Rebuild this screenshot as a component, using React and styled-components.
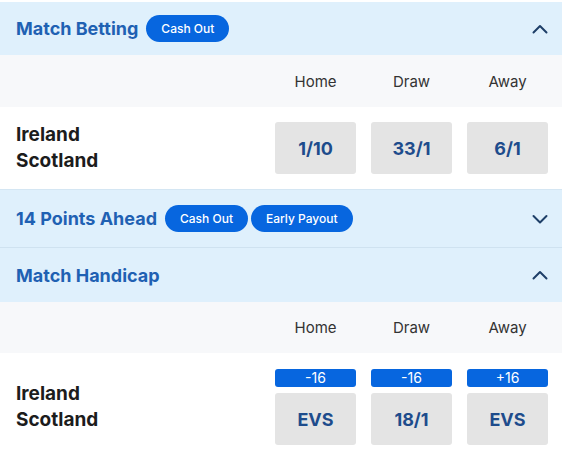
import React from "react"
import styled, { createGlobalStyle } from "styled-components"

const Global = createGlobalStyle`
  body {
    margin: 0;
    background: #ffffff;
    font-family: Inter, "Noto Sans", sans-serif;
  }
`
const Main = styled.div`
  width: 562px;
  padding-top: 2px;
  background: #ffffff;
`
const Header = styled.div`
  display: flex;
  align-items: center;
  gap: 3px;
  height: ${p => p.h}px;
  padding: 0 14px 0 16px;
  background: #dff0fc;
  border-top: ${p => (p.lined ? "1px solid #d4e6f3" : "none")};
  border-bottom: ${p => (p.lined ? "1px solid #cfe2f0" : "none")};
`
const Title = styled.div`
  font-size: 18px;
  font-weight: 700;
  color: #1f61b3;
  margin-right: 5px;
`
const Pill = styled.div`
  display: flex;
  align-items: center;
  height: 27px;
  padding: 0 15px;
  border-radius: 14px;
  background: #0766df;
  color: #ffffff;
  font-size: 12px;
  font-weight: 500;
`
const Chevron = styled.svg`
  margin-left: auto;
  width: 16px;
  height: 10px;
`
const Columns = styled.div`
  display: grid;
  grid-template-columns: 81px 81px 81px;
  column-gap: 15px;
  justify-content: end;
  align-items: center;
  height: ${p => p.h}px;
  padding-right: 14px;
  background: #f7f8fa;
`
const ColLabel = styled.div`
  text-align: center;
  font-size: 15px;
  color: #333333;
`
const Row = styled.div`
  display: flex;
  align-items: center;
  padding: ${p => p.pad};
  padding-left: 16px;
  padding-right: 14px;
  background: #ffffff;
`
const Teams = styled.div`
  flex: 1;
  font-size: 19px;
  font-weight: 700;
  line-height: 26px;
  color: #1c1c1c;
`
const Prices = styled.div`
  display: grid;
  grid-template-columns: 81px 81px 81px;
  column-gap: 15px;
`
const Cell = styled.div`
  display: flex;
  flex-direction: column;
  gap: 6px;
`
const Line = styled.div`
  height: 18px;
  border-radius: 3px;
  background: #0766df;
  color: #ffffff;
  font-size: 14px;
  line-height: 18px;
  text-align: center;
`
const Odds = styled.div`
  display: flex;
  align-items: center;
  justify-content: center;
  height: 52px;
  border-radius: 3px;
  background: #e4e4e4;
  color: #1e4c8c;
  font-size: 18px;
  font-weight: 700;
`

const Arrow = ({ up }) => (
  <Chevron viewBox="0 0 16 10">
    <path
      d={up ? "M1.5 8.5 L8 2 L14.5 8.5" : "M1.5 2 L8 8.5 L14.5 2"}
      fill="none"
      stroke="#1e3f68"
      strokeWidth="2"
      strokeLinecap="round"
      strokeLinejoin="round"
    />
  </Chevron>
)

const ColHeads = ({ h }) => (
  <Columns h={h}>
    <ColLabel>Home</ColLabel>
    <ColLabel>Draw</ColLabel>
    <ColLabel>Away</ColLabel>
  </Columns>
)

const TeamNames = () => (
  <Teams>
    Ireland
    <br />
    Scotland
  </Teams>
)

export default function App() {
  const handicap = [
    { line: "-16", odds: "EVS" },
    { line: "-16", odds: "18/1" },
    { line: "+16", odds: "EVS" },
  ]
  return (
    <Main>
      <Global />
      <Header h={53}>
        <Title>Match Betting</Title>
        <Pill>Cash Out</Pill>
        <Arrow up />
      </Header>
      <ColHeads h={52} />
      <Row pad="15px 0">
        <TeamNames />
        <Prices>
          <Odds>1/10</Odds>
          <Odds>33/1</Odds>
          <Odds>6/1</Odds>
        </Prices>
      </Row>
      <Header h={57} lined>
        <Title>14 Points Ahead</Title>
        <Pill>Cash Out</Pill>
        <Pill>Early Payout</Pill>
        <Arrow />
      </Header>
      <Header h={54}>
        <Title>Match Handicap</Title>
        <Arrow up />
      </Header>
      <ColHeads h={51} />
      <Row pad="16px 0">
        <TeamNames />
        <Prices>
          {handicap.map((c, i) => (
            <Cell key={i}>
              <Line>{c.line}</Line>
              <Odds>{c.odds}</Odds>
            </Cell>
          ))}
        </Prices>
      </Row>
    </Main>
  )
}
